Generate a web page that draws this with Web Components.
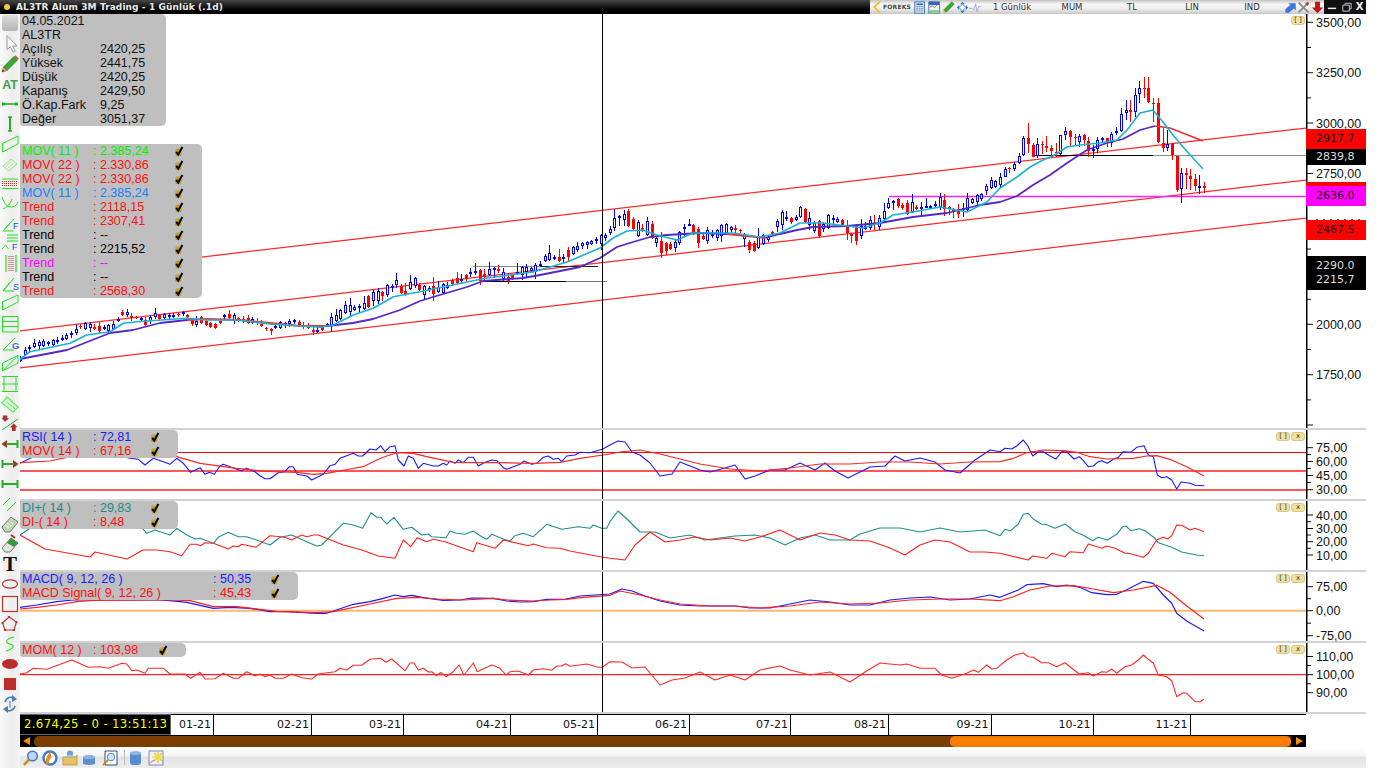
<!DOCTYPE html>
<html lang="tr">
<head>
<meta charset="utf-8">
<title>AL3TR Alum 3M Trading</title>
<style>
  html, body { margin: 0; background: #fff; font-family: "Liberation Sans", Arial, sans-serif; }
</style>
</head>
<body>
<fx-window>
  <fx-titlebar slot="title">AL3TR Alum 3M Trading - 1 Günlük (.1d)</fx-titlebar>
  <fx-rail slot="rail"></fx-rail>

  <fx-pane name="price" height="414" top="14">
    <fx-legend style="--top:0px;--w:146px;--name:78px;--val:66px;--chk:0px">
      <fx-row name="04.05.2021" nocheck></fx-row>
      <fx-row name="AL3TR" nocheck></fx-row>
      <fx-row name="Açılış" value="2420,25" nocheck></fx-row>
      <fx-row name="Yüksek" value="2441,75" nocheck></fx-row>
      <fx-row name="Düşük" value="2420,25" nocheck></fx-row>
      <fx-row name="Kapanış" value="2429,50" nocheck></fx-row>
      <fx-row name="Ö.Kap.Fark" value="9,25" nocheck></fx-row>
      <fx-row name="Değer" value="3051,37" nocheck></fx-row>
    </fx-legend>
    <fx-legend style="--top:130px;--w:182px;--name:71px;--val:81px;--chk:10px">
      <fx-row style="color:#00f000" name="MOV( 11 )" value=": 2.385,24"></fx-row>
      <fx-row style="color:#ff1010" name="MOV( 22 )" value=": 2.330,86"></fx-row>
      <fx-row style="color:#ff1010" name="MOV( 22 )" value=": 2.330,86"></fx-row>
      <fx-row style="color:#1a80ff" name="MOV( 11 )" value=": 2.385,24"></fx-row>
      <fx-row style="color:#ff1010" name="Trend" value=": 2118,15"></fx-row>
      <fx-row style="color:#ff1010" name="Trend" value=": 2307,41"></fx-row>
      <fx-row style="color:#000" name="Trend" value=": --"></fx-row>
      <fx-row style="color:#000" name="Trend" value=": 2215,52"></fx-row>
      <fx-row style="color:#ff00ff" name="Trend" value=": --"></fx-row>
      <fx-row style="color:#000" name="Trend" value=": --"></fx-row>
      <fx-row style="color:#ff1010" name="Trend" value=": 2568,30"></fx-row>
    </fx-legend>
    <fx-pills slot="pills" single></fx-pills>
    <fx-tag slot="axis" y="115" bg="#ff0000">2917,7</fx-tag>
    <fx-tag slot="axis" y="135" bg="#000" fg="#ddd" h="16">2839,8</fx-tag>
    <fx-tag slot="axis" y="168" bg="#ff0000" h="8"></fx-tag>
    <fx-tag slot="axis" y="172" bg="#ff00ff">2636,0</fx-tag>
    <fx-tag slot="axis" y="206" bg="#ff0000">2467,5</fx-tag>
    <fx-tag slot="axis" y="242" bg="#000" fg="#ddd" h="34">2290.0<br>2215,7</fx-tag>
  </fx-pane>

  <fx-pane name="rsi" height="69" top="430">
    <fx-legend style="--top:0px;--w:158px;--name:71px;--val:57px;--chk:10px">
      <fx-row style="color:#1a1aff" name="RSI( 14 )" value=": 72,81"></fx-row>
      <fx-row style="color:#ff1010" name="MOV( 14 )" value=": 67,16"></fx-row>
    </fx-legend>
    <fx-pills slot="pills"></fx-pills>
  </fx-pane>

  <fx-pane name="di" height="69" top="501">
    <fx-legend style="--top:0px;--w:158px;--name:71px;--val:57px;--chk:10px">
      <fx-row style="color:#1a8a8a" name="DI+( 14 )" value=": 29,83"></fx-row>
      <fx-row style="color:#ff1010" name="DI-( 14 )" value=": 8,48"></fx-row>
    </fx-legend>
    <fx-pills slot="pills"></fx-pills>
  </fx-pane>

  <fx-pane name="macd" height="69" top="572">
    <fx-legend style="--top:0px;--w:278px;--name:191px;--val:57px;--chk:10px">
      <fx-row style="color:#1a1aff" name="MACD( 9, 12, 26 )" value=": 50,35"></fx-row>
      <fx-row style="color:#ff1010" name="MACD Signal( 9, 12, 26 )" value=": 45,43"></fx-row>
    </fx-legend>
    <fx-pills slot="pills"></fx-pills>
  </fx-pane>

  <fx-pane name="mom" height="69" top="643">
    <fx-legend style="--top:0px;--w:166px;--name:71px;--val:65px;--chk:10px">
      <fx-row style="color:#ff1010" name="MOM( 12 )" value=": 103,98"></fx-row>
    </fx-legend>
    <fx-pills slot="pills"></fx-pills>
  </fx-pane>

  <fx-datebar></fx-datebar>
  <fx-scroller></fx-scroller>
  <fx-toolbar></fx-toolbar>
</fx-window>

<script>
// zoomed coordinates: offset + value / 3
const z = (ox, oy, f) => { const o = []; for (let i = 0; i < f.length; i += 2) o.push([ox + f[i] / 3, oy + f[i + 1] / 3]); return o; };
const abs = f => z(0, 0, f.map(v => v * 3));

const interp = (pts, x) => {
    if (x <= pts[0][0]) return pts[0][1];
    for (let i = 1; i < pts.length; i++) {
        if (x <= pts[i][0]) {
            const t = (x - pts[i - 1][0]) / (pts[i][0] - pts[i - 1][0]);
            return pts[i - 1][1] + t * (pts[i][1] - pts[i - 1][1]);
        }
    }
    return pts[pts.length - 1][1];
};

const candlePath = [
    ...z(20, 200, [0,478,15,455,40,435,55,432,70,430,85,428,100,428,125,418,150,405,165,395,180,380,195,378,210,378,225,385,240,385,262,385,275,385,292,360,305,340,320,340,335,350,345,352,360,355,375,368,388,360,402,345,418,350,432,348,445,348,472,345,485,335,500,345,515,365,530,370,542,360,555,368,570,375,583,380,597,370,610,348,625,348,640,352,655,358,680,362,695,362,720,370,737,385,750,392,765,382,780,375,795,372,805,368,820,362,832,370,848,380,860,378,875,392,890,392,900,388,915,380,928,368,945,355,960,345,970,330,985,325,1000,325,1012,322,1025,322,1040,310,1055,290,1070,288,1082,285,1097,272,1112,265,1125,245,1138,255,1150,290,1165,265,1180,240]),
    ...z(400, 190, [25,295,40,270,52,285,68,305,82,295,95,300,108,300,120,295,135,295,150,280,165,270,180,272,192,265,205,255,220,240,232,252,248,262,262,250,275,240,290,235,304,250,318,268,332,265,345,250,358,245,372,240,386,238,400,240,415,230,428,212,442,197,455,202,470,205,483,208,496,198,512,183,525,178,538,168,553,160,566,162,580,152,595,150,607,145,622,135,637,112,650,85,663,80,677,80,690,90,706,112,720,122,734,115,748,112,760,130,775,165,790,175,803,168,817,170,830,160,845,130,858,103,871,103,885,125,900,145,914,140,928,135,942,135,956,130,970,115,983,117,997,115,1012,118,1024,125,1040,150,1052,178,1067,165,1080,152,1094,145,1108,145,1122,120,1135,92,1150,82,1163,85,1178,92,1192,80]),
    ...z(780, 100, [60,335,78,350,93,370,105,385,120,385,133,378,148,360,162,355,175,362,190,370,205,400,217,408,232,397,245,392,259,378,273,370,286,375,300,365,316,335,328,310,343,305,355,308,370,322,385,325,398,320,412,325,426,325,440,318,454,322,466,312,481,305,496,315,508,325,523,335,538,335,550,325,565,310,577,302,592,295,607,288,620,260,634,250,649,252,661,240])
];

// last candles: x3, body top, body bottom, wick top, wick bottom, up (in zoom coords, offset 1000,60)
const lastCandles = [
    [0,352,375,345,385,1],[15,327,350,322,352,1],[28,325,326,320,338,0],[43,312,328,305,332,1],[57,288,310,280,312,1],
    [70,233,285,228,288,1],[85,235,253,190,280,0],[100,255,290,250,292,0],[112,253,288,235,293,1],[127,253,254,243,282,0],
    [139,257,264,228,275,0],[154,265,272,255,288,0],[168,275,280,250,290,0],[181,226,282,224,285,1],[196,213,225,202,240,1],
    [211,213,232,210,262,0],[224,232,234,222,258,0],[238,228,245,222,262,1],[251,225,240,222,258,0],[265,242,272,230,290,0],
    [280,268,272,255,293,1],[292,240,268,232,280,1],[307,235,237,232,250,1],[320,235,250,235,262,0],[334,223,248,215,260,1],
    [349,213,220,200,225,1],[362,162,212,145,215,1],[377,150,160,120,180,1],[391,150,155,120,185,0],[404,105,155,85,172,1],
    [418,85,103,62,130,1],[432,83,86,52,115,0],[445,85,125,52,128,0],[460,128,129,115,185,0],[473,130,246,115,248,0],
    [488,248,263,205,275,0],[502,252,264,210,272,1],[515,252,285,250,300,0],[530,288,390,288,395,0],[544,340,388,325,428,1],
    [557,340,346,325,388,0],[571,348,356,328,390,0],[584,358,378,342,392,0],[598,378,379,345,402,1],[613,378,384,366,398,0]
];

const buildCandles = () => {
    let seed = 4711, out = '';
    const rnd = () => (seed = (seed * 16807) % 2147483647) / 2147483647;
    const draw = (x, top, bot, wt, wb, up) => {
        const X = Math.round(x) - 20;
        const t = Math.round(top) - 14, b = Math.max(Math.round(bot) - 14, t + 1);
        out += `<line x1="${X + .5}" x2="${X + .5}" y1="${Math.round(wt) - 14}" y2="${Math.round(wb) - 14}" stroke="${up ? '#00f' : '#f00'}"/>`;
        if (up) out += `<rect x="${X - .5}" y="${t + .5}" width="2" height="${Math.max(b - t - 1, 1)}" fill="#fff" stroke="#00f"/>`;
        else out += `<rect x="${X - 1}" y="${t}" width="3" height="${b - t}" fill="#f00"/>`;
    };
    for (let i = 0; i < 212; i++) {
        const x = 20 + i * 4.644;
        const c = interp(candlePath, x), p = interp(candlePath, x - 4.644);
        const amp = x < 330 ? 2.5 : x < 620 ? 5 : 7;
        const half = Math.pow(rnd(), 1.6) * amp + .6;
        let up = c <= p;
        if (rnd() < .12) up = !up;
        const wt = c - half - 1 - Math.pow(rnd(), 2.4) * (x < 330 ? 4 : 8);
        const wb = c + half + 1 + Math.pow(rnd(), 2.4) * (x < 330 ? 3 : 7);
        draw(x, c - half, c + half, wt, wb, up);
    }
    lastCandles.forEach(k => draw(1000 + k[0] / 3, 60 + k[1] / 3, 60 + k[2] / 3, 60 + k[3] / 3, 60 + k[4] / 3, k[5]));
    return `<g shape-rendering="crispEdges" stroke-width="1">${out}</g>`;
};

const cyan = [
    ...z(20, 200, [0,478,30,455,150,430,200,405,270,395,310,370,350,365,500,355,560,360,650,360,750,372,900,382,940,375,1000,345,1060,325,1120,290,1200,275]),
    ...abs([467,282,487,278,533,272,567,262,600,248,613,238,627,231,643,230,657,235,677,240,693,233,733,233,760,237,780,233,800,223,823,223,847,226,863,228,880,223,893,215,913,212,940,207,967,212,987,202,1000,188,1017,177,1030,167,1043,160,1053,156,1067,147,1080,145,1100,143,1117,140,1127,130,1140,113,1153,110,1163,122,1173,135,1183,147,1203,169])
];
const purpleA = abs([20,359,67,350,110,333,133,330,160,323,187,320]);
const redA = abs([187,320,207,319,240,320,270,323,300,326,327,326]);
const purpleB = abs([327,326,353,323,373,319,400,310,420,301,433,297,467,287,483,281,523,278,540,275,580,267,600,258,617,247,633,242,650,237,667,235,700,233,727,234]);
const redB = abs([727,234,747,236,765,238]);
const purpleC = abs([765,238,780,234,797,230,813,227,847,226,880,223,913,217,947,213,980,205,1000,202,1017,196,1033,185,1050,175,1067,163,1087,150,1107,143,1123,139,1140,130,1155,126]);
const redC = abs([1155,126,1170,128,1203,141]);

const seg = (x1, y1, x2, y2, color, w) => ({ pts: [[x1, y1], [x2, y2]], color, w });
const channel = (y20, y1306) => seg(20, y20, 1306, y1306, '#ff2a2a', 1.25);

const hRule = (y, color, w) => seg(20, y, 1306, y, color, w);

const PANES = {
    price: {
        custom: buildCandles,
        before: [
            channel(278.3, 128), channel(331, 180), channel(368, 218),
            seg(473, 266.5, 540, 266.5, '#888', 1.2), seg(540, 266.5, 598, 266.5, '#222', 1.2),
            seg(483, 281.5, 590, 281.5, '#000', 1.2), seg(566, 281.5, 607, 281.5, '#777', 1.2),
            seg(1033, 155.5, 1153, 155.5, '#000', 1.2), seg(1153, 155.5, 1306, 155.5, '#888', 1.2),
            seg(889, 196.5, 1306, 196.5, '#ff20ff', 1.3)
        ],
        lines: [
            { pts: purpleA, color: '#5428c4', w: 1.8 }, { pts: redA, color: '#f03030', w: 1.8 },
            { pts: purpleB, color: '#5428c4', w: 1.8 }, { pts: redB, color: '#f03030', w: 1.8 },
            { pts: purpleC, color: '#5428c4', w: 1.8 }, { pts: redC, color: '#f03030', w: 1.5 },
            { pts: cyan, color: '#1ab2d2', w: 1.6 }
        ],
        labels: [[22.3, '3500,00'], [72.7, '3250,00'], [123, '3000,00'], [173.5, '2750,00'], [324.3, '2000,00'], [374.7, '1750,00']],
        majors: [22.3, 72.7, 123, 173.5, 224, 274.3, 324.3, 374.7, 425],
        minors: [47.5, 97.9, 148.3, 198.7, 249, 299.3, 349.5, 399.9],
        // tops of the axis label hidden behind the red price tag
        axisExtra: `<path d="M10 205.5H54" stroke="#555" stroke-dasharray="2 5"/>`
    },
    rsi: {
        before: [hRule(452.5, '#ff0000', 1.2), hRule(471, '#ff2020', 1.4), hRule(490, '#ff2020', 1.4)],
        lines: [
            { pts: [...z(0, 300, [60,490,100,470,200,460,300,455,390,475,415,478,435,495,460,475,490,485]), ...z(170, 430, [0,103,20,85,40,100,62,127,90,113,105,133,118,127,133,133,150,108,160,103,200,118,215,122,230,115,255,125,270,137,285,146,300,146,325,128,345,125,358,110,370,110,382,133,410,138,425,150,460,133,480,107,495,103,510,85,550,70,565,78,578,78,600,57,618,60,632,47,645,65,660,50,675,47,685,90,702,108,715,78,730,85,745,115,760,100,790,108,805,108,820,100,830,105,840,93,855,100,865,90,880,98,895,82,910,82,925,108,945,97,965,90,980,92,1000,113,1010,118,1030,110,1050,103,1062,93,1085,103,1100,100,1120,82,1135,78,1150,88,1165,85,1175,95,1190,78,1215,75,1230,67,1260,68,1297,58,1320,45]),
                ...abs([618,441,625,442,632,452,640,455,650,463,660,476,672,474,680,462,690,466,700,470,710,472,725,468,735,465,745,479,755,476,770,470,785,470,800,463,815,470,825,463,835,471,848,478,860,472,870,467,885,466,895,456,905,461,920,458,935,462,945,470,960,473,975,460,990,450]),
                ...z(1000, 420, [0,95,15,85,35,87,50,78,70,60,85,80,98,108,115,95,130,95,150,108,168,117,185,95,198,93,222,117,238,110,250,122,265,140,280,138,295,125,305,122,322,130,340,118,355,112,370,95,392,97,410,82,432,77,445,105,460,110,472,165,485,173,500,170,515,180,530,207,543,186,570,190,585,196,612,197])], color: '#1a1aff', w: 1.1 },
            { pts: [...z(0, 300, [60,488,150,483,210,470,530,470,600,490]), ...z(170, 430, [200,115,290,124,380,127,430,133,470,130,540,117,580,110,620,90,650,78,680,68,730,70,780,82,850,97,920,98,1000,98,1090,100,1170,97,1230,85,1300,75,1320,72]),
                ...abs([620,452,640,450,660,454,680,459,700,464,730,469,760,471,790,468,820,464,850,464,880,462,910,462,940,464,970,462]),
                ...z(1000, 420, [0,125,40,115,80,98,130,90,190,92,230,97,270,110,320,117,400,115,440,108,470,107,510,118,560,140,612,168])], color: '#f52a2a', w: 1.2 }
        ],
        labels: [[447.7, '75,00'], [461.5, '60,00'], [475.5, '45,00'], [489.7, '30,00']],
        minors: [454.5, 468.5, 482.5]
    },
    di: {
        lines: [
            { pts: [...z(0, 300, [60,705,90,685,300,675,425,682,440,700,465,690]), ...z(170, 430, [0,315,20,295,50,315,75,327,90,325,130,340,145,322,175,307,205,320,230,320,260,330,300,345,330,322,365,315,410,335,440,348,455,345,520,280,550,285,578,295,603,248,620,262,632,262,650,282,672,262,700,298,725,292,755,315,775,312,785,320,828,323,840,303,860,310,885,313,910,303,935,320,950,328,965,313,1000,327,1020,333,1035,317,1060,310,1090,320,1130,283,1175,298,1225,290,1260,295,1270,285,1295,295,1310,295,1320,275]),
                ...abs([618,511,628,520,640,532,655,532,670,538,690,535,705,540,720,538,735,536,755,535,770,538,785,545,800,538,815,535,830,540,850,540,860,534,880,528,900,528,920,532,940,528,960,532,985,530]),
                ...z(1000, 420, [0,347,15,328,32,332,55,312,70,283,85,280,100,297,125,313,140,314,165,325,195,312,225,335,250,346,278,362,295,352,322,360,350,343,368,320,378,318,392,332,418,326,435,332,465,355,475,368,515,382,545,396,590,405,612,407])], color: '#1f8f8f', w: 1.1 },
            { pts: [...abs([20,535,45,549,90,557,95,552,127,559,143,550,157,550]), ...z(170, 430, [0,365,35,377,60,343,80,343,92,347,105,338,130,340,175,357,190,348,205,350,215,343,258,352,300,317,345,322,365,330,395,315,410,320,430,315,445,315,520,345,575,360,625,378,675,385,700,330,722,350,742,323,770,335,790,328,825,335,910,365,920,338,975,355,1000,330,1075,347,1090,342,1130,353,1170,355,1200,363,1290,380,1320,385]),
                ...abs([625,560,635,545,650,532,665,542,680,540,695,537,710,540,730,538,745,541,760,537,780,530,800,540,820,533,835,535,850,540,870,541,890,548,905,555,920,545,935,540,950,542,970,552,985,552]),
                ...z(1000, 420, [0,400,85,420,98,408,140,415,155,400,195,410,210,395,250,398,265,372,305,385,320,378,345,385,375,400,385,400,430,412,445,400,470,360,490,352,503,357,515,347,530,315,545,316,570,330,585,325,612,335])], color: '#ff2020', w: 1.1 }
        ],
        labels: [[515, '40,00'], [528.5, '30,00'], [541.7, '20,00'], [555, '10,00']],
        minors: [521.7, 535, 548.3]
    },
    macd: {
        before: [hRule(610.7, '#ffb870', 2)],
        lines: [
            { pts: [...z(0, 550, [60,172,110,165,170,155,220,150,280,150,480,150]), ...z(170, 570, [0,92,50,97,130,115,180,112,240,115,300,125,350,125,440,130,470,130,550,103,600,95,640,85,675,75,700,80,725,76,760,83,820,91,870,90,905,84,970,85,1010,93,1050,96,1090,95,1130,88,1185,88,1230,78,1320,72]),
                ...abs([622,589,632,591,645,596,660,601,680,605,700,606,720,606,735,606,750,608,770,608,790,604,810,600,830,602,850,605,870,605,890,600,910,598,930,597,950,600,970,599,990,595]),
                ...z(1000, 420, [0,532,30,520,55,510,80,494,130,491,170,500,200,495,240,502,275,518,320,524,350,523,385,507,430,484,460,490,490,525,515,550,530,580,560,603,612,633])], color: '#1a1aff', w: 1.2 },
            { pts: [...z(0, 550, [60,177,110,172,170,165,230,155,280,151,480,150]), ...z(170, 570, [0,90,60,92,130,110,200,110,270,118,320,124,440,128,490,125,600,102,680,85,740,82,800,87,880,90,970,85,1010,90,1090,93,1140,90,1190,88,1240,82,1320,76]),
                ...abs([620,591,640,595,660,600,680,604,710,606,735,606,760,608,790,606,820,602,850,604,880,603,910,600,940,599,970,599]),
                ...z(1000, 420, [0,542,40,530,90,510,150,498,220,497,280,507,340,518,400,510,470,496,510,517,550,550,612,597])], color: '#ff2020', w: 1.2 }
        ],
        labels: [[586.7, '75,00'], [610.7, '0,00'], [635.7, '-75,00']],
        minors: [598.7, 623.2]
    },
    mom: {
        before: [hRule(674.7, '#ff2020', 1.3)],
        lines: [
            { pts: [...z(0, 550, [60,372,80,368,100,355,140,358,215,330,265,352,300,350,325,355,365,340,380,342,395,362,410,360,435,370,445,355,490,355]), ...z(170, 570, [0,312,45,312,62,325,90,307,105,327,135,326,160,310,190,325,205,325,230,305,255,317,270,312,285,320,300,315,315,325,340,325,365,312,395,323,425,327,445,312,495,305,510,295,530,300,550,286,575,286,600,268,632,265,648,277,665,267,705,302,720,279,732,279,745,300,760,295,775,306,785,305,800,317,812,307,828,320,850,305,867,285,882,315,910,279,922,305,965,285,990,295,1008,315,1020,305,1045,303,1075,315,1090,300,1120,296,1145,301,1160,288,1175,288,1187,281,1200,289,1250,282,1285,292,1297,292,1320,275]),
                ...abs([622,662,632,668,645,667,660,685,672,680,685,678,700,672,715,680,730,675,745,680,760,670,780,666,790,670,810,675,830,672,850,682,865,672,880,663]),
                ...z(900, 660, [0,15,20,12,60,25,105,25,125,45,155,55,200,40,220,30,235,37,260,15,275,27,290,25,320,0,345,-15,370,-21,385,-10,400,-8,425,8,445,8,470,20,495,8,537,42,565,38,580,48,605,35,620,37,635,27,650,40,675,20,695,15,715,0,730,-15,745,-2,760,10,775,45,800,50,815,62,830,110,850,98,860,100,885,125,900,125,912,118])], color: '#ff2a2a', w: 1.1 }
        ],
        labels: [[656.5, '110,00'], [674.7, '100,00'], [692.7, '90,00']],
        minors: [665.5, 683.7]
    }
};

const G = '#1fe51f';
const ICONS = {
    blank: `<defs><linearGradient id="b" x1="0" y1="0" x2="0" y2="1"><stop offset="0" stop-color="#dcdcdc"/><stop offset="1" stop-color="#b4b4b4"/></linearGradient></defs><rect x="2" y="1" width="16" height="16" rx="3" fill="url(#b)"/>`,
    cursor: `<path d="M7 1.5V15.5L10.4 12.8L13 18L15.2 17L12.6 12H17Z" fill="#f6f6f6" stroke="#9a9a9a"/>`,
    pencil: `<path d="M14 2.5L17.5 6L7 16.5L3.5 13Z" fill="#3aa82a" stroke="#256f1a" stroke-width=".7"/><path d="M3.5 13L7 16.5L2 18Z" fill="#e8b878" stroke="#80501e" stroke-width=".6"/><path d="M2 18L3 15.8L4.2 17Z" fill="#222"/><path d="M14 2.5L15.5 1.2L18.8 4.5L17.5 6Z" fill="#d25a3a"/>`,
    at: `<text x="10" y="15" text-anchor="middle" font-family="Liberation Sans" font-weight="700" font-size="12.5" fill="#4a9a52">AT</text>`,
    hline: `<path d="M3 10H17" stroke="#25ad25" stroke-width="1.6"/><rect x="2" y="8.5" width="3" height="3" fill="#25ad25"/><rect x="15" y="8.5" width="3" height="3" fill="#25ad25"/>`,
    vline: `<path d="M10 3V17" stroke="#25ad25" stroke-width="2"/><path d="M8 3H12M8 17H12" stroke="#25ad25" stroke-width="1.6"/>`,
    chan: `<path d="M2.5 9V18L18 10V2L2.5 9.5" fill="none" stroke="${G}"/>`,
    ruler: `<path d="M3 12L11 5L17 10L9 17Z" fill="#e6f6e2" stroke="#8fe58f"/><path d="M6 12L11 8M8 14L13 10" stroke="#f0a0a0" stroke-dasharray="1 1"/>`,
    dots: `<path d="M2 5H18M2 14.5H18" stroke="${G}"/><path d="M2 7.5H18M2 9.5H18M2 11.5H18" stroke="#c03030" stroke-dasharray="1 1"/>`,
    arcs: `<path d="M2 3Q5 13 11 13Q16 13 18 8M3 15Q9 13 12 5" fill="none" stroke="${G}"/>`,
    fanf: `<path d="M3 17L14 5M3 17L10 9M3 17H13" fill="none" stroke="${G}"/><text x="13" y="15" font-family="Liberation Sans" font-size="9" fill="#2a50d8">F</text>`,
    linesf: `<path d="M7 1H18M7 4H18M7 7H18M2 15L5.5 11L8.5 15" fill="none" stroke="${G}"/><text x="12" y="16" font-family="Liberation Sans" font-size="9" fill="#2a50d8">F</text>`,
    vdots: `<path d="M6 1V18M16 1V18" stroke="${G}" stroke-width="1.2"/><path d="M9 2V17M11 2V17M13 2V17" stroke="#c03030" stroke-dasharray="1 1"/>`,
    fans: `<path d="M3 17L14 4M3 17L9 9M3 17H14" fill="none" stroke="${G}"/><text x="13" y="16" font-family="Liberation Sans" font-size="9" fill="#2a50d8">S</text>`,
    chan2: `<path d="M2.5 7V16L18 8V1L2.5 8" fill="none" stroke="${G}"/>`,
    grid: `<path d="M2.5 2.5H18V18H2.5ZM2.5 7.5H18M2.5 12.5H18" fill="none" stroke="${G}"/>`,
    fang: `<path d="M3 16L15 4M3 16L10 9M3 16H14" fill="none" stroke="${G}"/><text x="12" y="15" font-family="Liberation Sans" font-size="9.5" font-weight="700" fill="#4a70c8">G</text>`,
    zig: `<path d="M2.5 9L18 1.5M2.5 17L18 9M2.5 9V17M18 1.5V9M2.5 17L18 1.5" fill="none" stroke="${G}"/>`,
    hbar: `<path d="M2 2.5H18M2 10H18M2 17.5H18M4 2.5V17.5M16 2.5V17.5" fill="none" stroke="${G}"/>`,
    ruler2: `<path d="M2 9L7 3L18 13L13 18Z" fill="#d4fbd4" stroke="#6cea6c" stroke-width="1.3"/><path d="M7 8L9 10M10 10.5L12 12.5M13 13L15 15" stroke="#5ad85a"/>`,
    redarrows: `<path d="M2 16L18 5" stroke="#27a527"/><path d="M2 5H7V8H9L4.5 12L0.5 8H2Z" transform="translate(1 -3) scale(.9)" fill="#b03030"/><path d="M15 11L19 15H17V19H13V15H11Z" transform="translate(-.5 -1) scale(.95)" fill="#b03030"/>`,
    leftbar: `<path d="M1.5 10L7 6V14Z" fill="#a83020"/><path d="M6 10H18M17.5 6V14" stroke="#25ad25" stroke-width="2"/>`,
    rightbar: `<path d="M18.5 10L13 6V14Z" fill="#a83020"/><path d="M2 10H14M2.5 6V14" stroke="#25ad25" stroke-width="2"/>`,
    bar: `<path d="M2 10H18M2.5 6V14M17.5 6V14" stroke="#25ad25" stroke-width="2"/>`,
    dbl: `<path d="M3 11L10 4M7 17L16 8" stroke="${G}"/>`,
    eraser: `<path d="M2 13L11 3L18 8L10 18L5 18Z" fill="#bcd8b0" stroke="#777"/><path d="M9 7L13 10M7 9L11 12M5 11L9 14" stroke="#fff"/>`,
    eraser2: `<path d="M2 14L11 4L18 9L10 18L5 18Z" fill="#dfe8d8" stroke="#777"/><path d="M11 4L18 9L14 13L7 9Z" fill="#3a9a3a"/><path d="M11 1L15 4" stroke="#c03030" stroke-width="2"/>`,
    bigt: `<text x="10" y="17" text-anchor="middle" font-family="Liberation Serif" font-weight="700" font-size="21" fill="#111">T</text>`,
    oval: `<ellipse cx="10" cy="10" rx="7.5" ry="4.2" fill="none" stroke="#b8352c" stroke-width="1.2"/>`,
    square: `<rect x="2.5" y="2.5" width="15" height="15" fill="none" stroke="#b8352c" stroke-width="1.2"/>`,
    penta: `<path d="M9 3L16.5 8L14 16H5L2.5 9Z" fill="none" stroke="#b8352c" stroke-width="1.1"/><g fill="#b8352c"><rect x="8" y="2" width="2" height="2"/><rect x="15.5" y="7" width="2" height="2"/><rect x="13" y="15" width="2" height="2"/><rect x="4" y="15" width="2" height="2"/><rect x="1.5" y="8" width="2" height="2"/></g>`,
    squig: `<path d="M14 3C5 5 5 9 10 10C15 11 15 14 6 17" fill="none" stroke="${G}" stroke-width="1.1"/>`,
    ovalf: `<ellipse cx="10" cy="10" rx="8" ry="5" fill="#bb2f29"/>`,
    squaref: `<rect x="4" y="4" width="12" height="12" fill="#bb2f29"/>`,
    cycle: `<path d="M5 8C6 3 12 2 15 5M15 12C14 17 8 18 5 15" fill="none" stroke="#4a7ab0" stroke-width="1.4"/><path d="M12 1L17 5L12 8ZM8 19L3 15L8 12Z" fill="#4a7ab0"/><path d="M10 7V14" stroke="#4a7ab0"/>`,

    calc: `<rect x="1" y="1" width="12" height="14" fill="#dde8f8" stroke="#2a5aa0"/><path d="M3 3H11V5H3Z" fill="#2a70c8"/><path d="M3 7H5M6 7H8M9 7H11M3 9.5H5M6 9.5H8M9 9.5H11M3 12H5M6 12H8M9 12H11" stroke="#2a5aa0"/>`,
    minichart: `<rect x="1" y="1" width="13" height="14" fill="#f0f4fc" stroke="#3a6ab0"/><path d="M1 1H14V5H1Z" fill="#2a68c8"/><path d="M2 8L5 6L8 8L13 3" stroke="#e04040" fill="none"/><path d="M1 11H14V15H1Z" fill="#8fd08f"/>`,
    pencil2: `<path d="M12 1L15 4L5 14L2 11Z" fill="#3aa82a" stroke="#256f1a" stroke-width=".6"/><path d="M2 11L5 14L1 15Z" fill="#e8b878"/>`,
    diamond: `<path d="M8 1L11 4H5ZM8 15L5 12H11ZM1 8L4 5V11ZM15 8L12 11V5Z" fill="#3a78d0"/><rect x="5" y="5" width="6" height="6" fill="#fff" stroke="#3a78d0" transform="rotate(45 8 8)"/>`,
    pulse: `<path d="M0 9H4L6 11L8 4L10 13L12 7H15" fill="none" stroke="#9aa8b8"/>`,
    upright: `<path d="M2 10L8 5L6 3H14V11L12 9L6 14H2Z" fill="#3a78e0" stroke="#2050b0" stroke-width=".5"/>`,
    tools: `<path d="M2 2L14 14M14 2L2 14" stroke="#8a8a8a" stroke-width="2.2"/><path d="M10 3L13 1L15 3L13 6Z" fill="#c04030"/>`,
    down: `<path d="M5 1H11V8H15L8 15L1 8H5Z" fill="#c01818"/>`,

    lens: `<circle cx="10.5" cy="6" r="4.8" fill="#b8d8f6" stroke="#4878b8" stroke-width="1.5"/><path d="M7 9.5L2 15" stroke="#c58a20" stroke-width="2.6"/>`,
    globe: `<circle cx="8" cy="8" r="6.5" fill="#fff" stroke="#3f7cc4" stroke-width="2.4"/><path d="M9 1C7 5 12 6 8 9C6 11 9 14 5 15C2 11 5 5 9 1Z" fill="#e88a20"/>`,
    folder: `<path d="M1 7H13L15 5V15H1Z" fill="#e6c266" stroke="#a98a30" stroke-width=".7"/><circle cx="8" cy="3.5" r="3" fill="#6f9bd8"/><path d="M3 7Q8 2 13 7Z" fill="#9cc0ea"/>`,
    cyl: `<path d="M1 7Q7 3 13 7V14Q7 16 1 14Z" fill="#5f8fcf"/><ellipse cx="7" cy="7" rx="6" ry="2" fill="#90b4e4"/>`,
    pagezoom: `<path d="M3 1H15V15H3Z" fill="#fff" stroke="#3a4a70"/><circle cx="9" cy="7" r="3.8" fill="#cfe3f8" stroke="#5a88c0"/><path d="M6 10L1 15" stroke="#c58a20" stroke-width="2"/>`,
    drum: `<rect x="1" y="2" width="11" height="13" rx="3" fill="#5a8cd0"/><ellipse cx="6.5" cy="3" rx="5.5" ry="2" fill="#8fb4e6"/>`,
    sun: `<rect x="1" y="1" width="14" height="14" fill="#eef2fa" stroke="#7a8ab0"/><path d="M10 1L10 13M4 7H15M6 3L14 11M14 3L6 11" stroke="#f0c020" stroke-width="1.2"/><circle cx="10" cy="7" r="2.6" fill="#f8d830"/><path d="M2 13L6 10" stroke="#e06060"/>`,
    ctlmin: `<path d="M2 8H11" stroke="#eee" stroke-width="1.6"/>`,
    ctlmax: `<path d="M2 4.5H9V11H2ZM4.5 4.5V2.5H11V8.5H9" fill="none" stroke="#ccc"/>`
};

class FxIcon extends HTMLElement {
    connectedCallback() {
        const size = +(this.getAttribute('size') || 20);
        const vb = this.getAttribute('vb') || size;
        this.attachShadow({ mode: 'open' }).innerHTML = `
            <style>:host { display: block; width: ${size}px; height: ${size}px; } svg { display: block; overflow: visible; }</style>
            <svg width="${size}" height="${size}" viewBox="0 0 ${vb} ${vb}">${ICONS[this.getAttribute('name')] || ''}</svg>`;
    }
}

class FxWindow extends HTMLElement {
    constructor() {
        super();
        this.attachShadow({ mode: 'open' }).innerHTML = `
            <style>
                :host { display: grid; width: 1366px; height: 768px; grid-template: 14px 1fr / 20px 1fr; overflow: hidden; }
                ::slotted([slot=title]) { grid-column: 1 / 3; }
                .stack { display: flex; flex-direction: column; min-width: 0; }
            </style>
            <slot name="title"></slot>
            <slot name="rail"></slot>
            <div class="stack"><slot></slot></div>`;
    }
}

class FxTitlebar extends HTMLElement {
    constructor() {
        super();
        const cell = (n, s = 14) => `<span class="cell" style="width:${s}px"><fx-icon name="${n}" size="13" vb="16"></fx-icon></span>`;
        const item = t => `<span class="item">${t}</span>`;
        this.attachShadow({ mode: 'open' }).innerHTML = `
            <style>
                :host { display: flex; height: 14px; background: linear-gradient(#464646, #000 70%); color: #e8e8e8; overflow: hidden; }
                .title { flex: 1; display: flex; align-items: center; gap: 6px; padding-left: 4px; font: 700 9px/14px "DejaVu Sans", sans-serif; letter-spacing: .1px; white-space: nowrap; }
                .dot { width: 6px; height: 6px; border-radius: 50%; background: #f4c73a; }
                .bar { width: 454px; display: flex; align-items: center; background: linear-gradient(#c4c4c4, #f8f8f8 30%, #efefef 60%, #c8c8c8); color: #333; font: 8.5px/14px "DejaVu Sans", sans-serif; }
                .logo { width: 43px; display: flex; align-items: center; gap: 2px; padding-left: 2px; box-sizing: border-box; font: 700 6px/14px "DejaVu Sans", sans-serif; letter-spacing: .2px; color: #444; }
                .chev { width: 9px; height: 12px; flex: none; color: #f2b90f; }
                .cell { display: flex; justify-content: center; align-items: center; }
                .item { width: 60px; text-align: center; }
                .pad { width: 2px; }
                .ctl { width: 42px; display: flex; align-items: center; justify-content: space-around; background: #111; color: #eee; font: 700 10px/14px "DejaVu Sans", sans-serif; padding-right: 1px; box-sizing: border-box; }
            </style>
            <div class="title"><span class="dot"></span><span><slot></slot></span></div>
            <div class="bar">
                <div class="logo">
                    <svg class="chev" viewBox="0 0 8 10"><path d="M6 0L1 5L6 10L8 10L3 5L8 0Z" fill="currentColor"/></svg>
                    <span>FOREKS</span>
                </div>
                ${cell('calc')}${cell('minichart')}${cell('pencil2')}${cell('diamond')}${cell('pulse', 13)}
                ${item('1 Günlük')}${item('MUM')}${item('TL')}${item('LIN')}${item('IND')}
                <span class="pad"></span>
                ${cell('upright', 13)}${cell('tools', 13)}${cell('down', 14)}
            </div>
            <div class="ctl"><fx-icon name="ctlmin" size="12" vb="13"></fx-icon><fx-icon name="ctlmax" size="12" vb="13"></fx-icon><span>X</span></div>`;
    }
}

class FxRail extends HTMLElement {
    tools = ['blank', 'cursor', 'pencil', 'at', 'hline', 'vline', 'chan', 'ruler', 'dots', 'arcs', 'fanf', 'linesf', 'vdots', 'fans', 'chan2', 'grid', 'fang', 'zig', 'hbar', 'ruler2', 'redarrows', 'leftbar', 'rightbar', 'bar', 'dbl', 'eraser', 'eraser2', 'bigt', 'oval', 'square', 'penta', 'squig', 'ovalf', 'squaref', 'cycle'];
    constructor() {
        super();
        this.attachShadow({ mode: 'open' }).innerHTML = `
            <style>
                :host { display: flex; flex-direction: column; width: 20px; background: linear-gradient(90deg, #fafafa, #ececec 60%, #f4f4f4); }
            </style>
            ${this.tools.map(t => `<fx-icon name="${t}"></fx-icon>`).join('')}`;
    }
}

class FxPane extends HTMLElement {
    connectedCallback() {
        const h = +this.getAttribute('height');
        const top = +this.getAttribute('top');
        const p = PANES[this.getAttribute('name')];
        const poly = l => `<polyline points="${l.pts.map(q => `${(q[0] - 20).toFixed(1)},${(q[1] - top).toFixed(1)}`).join(' ')}" fill="none" stroke="${l.color}" stroke-width="${l.w}" stroke-linejoin="round"/>`;
        const majors = p.majors || p.labels.map(l => l[0]);
        const ticks = majors.map(y => `<path d="M1 ${(y - top).toFixed(1)}H7" stroke="#111"/>`).join('')
            + (p.minors || []).map(y => `<path d="M1 ${(y - top).toFixed(1)}H5" stroke="#111"/>`).join('');
        const labels = p.labels.map(l => `<text x="10" y="${(l[0] - top + 4.5).toFixed(1)}">${l[1]}</text>`).join('');
        this.attachShadow({ mode: 'open' }).innerHTML = `
            <style>
                :host { display: grid; grid-template-columns: 1286px 60px; height: ${h}px; border-bottom: 2px solid #d2d2d2; }
                .plot, .axis { position: relative; height: ${h}px; }
                .plot { overflow: hidden; }
                svg { display: block; position: absolute; left: 0; top: 0; overflow: visible; }
                text { font: 12.5px "Liberation Sans", Arial, sans-serif; fill: #111; }
                .pills { position: absolute; right: 1px; top: 2px; }
            </style>
            <div class="plot">
                <svg width="1286" height="${h}">
                    ${(p.before || []).map(poly).join('')}
                    ${p.custom ? p.custom() : ''}
                    ${p.lines.map(poly).join('')}
                    <path d="M582.5 0V${h}" stroke="#000" stroke-width="1"/>
                </svg>
                <slot></slot>
                <div class="pills"><slot name="pills"></slot></div>
            </div>
            <div class="axis">
                <svg width="60" height="${h}">
                    <path d="M.75 0V${h}" stroke="#000" stroke-width="1.5"/>
                    ${ticks}${labels}${p.axisExtra || ''}
                </svg>
                <slot name="axis"></slot>
            </div>`;
    }
}

class FxLegend extends HTMLElement {
    constructor() {
        super();
        this.attachShadow({ mode: 'open' }).innerHTML = `
            <style>
                :host { position: absolute; left: 0; top: var(--top, 0); width: var(--w); box-sizing: border-box; padding-left: 2px; background: #bfbfbf; border-radius: 0 5px 5px 3px; display: flex; flex-direction: column; }
            </style>
            <slot></slot>`;
    }
}

class FxRow extends HTMLElement {
    connectedCallback() {
        const check = this.hasAttribute('nocheck') ? '' : `
            <svg width="10" height="12" viewBox="0 0 10 12"><rect x="1" y="3.5" width="6.5" height="7.5" rx="2" fill="#c9a21e"/><path d="M2.2 6.8L4.2 9.6L8.4 2" fill="none" stroke="#000" stroke-width="2"/></svg>`;
        this.attachShadow({ mode: 'open' }).innerHTML = `
            <style>
                :host { display: grid; grid-template-columns: var(--name) var(--val) var(--chk); height: 14px; align-items: center; font: 12.5px/14px "Liberation Sans", Arial, sans-serif; color: #111; white-space: nowrap; }
                svg { display: block; }
            </style>
            <span>${this.getAttribute('name')}</span><span>${this.getAttribute('value') || ''}</span>${check}`;
    }
}

class FxPills extends HTMLElement {
    connectedCallback() {
        this.attachShadow({ mode: 'open' }).innerHTML = `
            <style>
                :host { display: flex; gap: 1px; }
                span { width: 14px; height: 9px; box-sizing: border-box; background: #f1e0a4; border: 1px solid #dcc67e; border-radius: 3px; color: #333; font: 7px/7px "DejaVu Sans", sans-serif; text-align: center; }
            </style>
            <span>[ ]</span>${this.hasAttribute('single') ? '' : '<span>x</span>'}`;
    }
}

class FxTag extends HTMLElement {
    connectedCallback() {
        const h = this.getAttribute('h') || 20;
        this.attachShadow({ mode: 'open' }).innerHTML = `
            <style>
                :host { position: absolute; left: 0; top: ${this.getAttribute('y')}px; width: 60px; height: ${h}px; box-sizing: border-box; padding-left: 10px; display: flex; align-items: center; background: ${this.getAttribute('bg')}; color: ${this.getAttribute('fg') || '#111'}; font: 11px/14px "DejaVu Sans", sans-serif; }
            </style>
            <span><slot></slot></span>`;
    }
}

class FxDatebar extends HTMLElement {
    months = [['01-21', 43], ['02-21', 98], ['03-21', 92], ['04-21', 107], ['05-21', 87], ['06-21', 92], ['07-21', 101], ['08-21', 98], ['09-21', 102.5], ['10-21', 102], ['11-21', 97]];
    constructor() {
        super();
        this.attachShadow({ mode: 'open' }).innerHTML = `
            <style>
                :host { display: flex; width: 1286px; height: 21px; box-sizing: border-box; font: 11px/20px "DejaVu Sans", sans-serif; color: #111; }
                .clock { width: 151px; box-sizing: border-box; background: #000; border: 1px solid #666; border-left: 0; color: #ffff00; font-size: 11.7px; letter-spacing: .35px; line-height: 19px; padding-left: 4px; white-space: nowrap; }
                .m { box-sizing: border-box; border-right: 1px solid #000; border-top: 1px solid #000; text-align: right; padding-right: 2px; }
                .rest { flex: 1; border-top: 1px solid #000; }
            </style>
            <div class="clock">2.674,25 - 0 - 13:51:13</div>
            ${this.months.map(m => `<div class="m" style="width:${m[1]}px">${m[0]}</div>`).join('')}
            <div class="rest"></div>`;
    }
}

class FxScroller extends HTMLElement {
    constructor() {
        super();
        this.attachShadow({ mode: 'open' }).innerHTML = `
            <style>
                :host { display: flex; align-items: center; width: 1286px; height: 12px; background: #000; }
                .arrow { width: 0; height: 0; border-style: solid; border-color: transparent; border-width: 4.5px 0; }
                .l { border-right: 7px solid #ff8a10; margin: 0 4px 0 3px; }
                .r { border-left: 7px solid #ff8a10; margin: 0 3px 0 5px; }
                .track { flex: 1; height: 11px; border-radius: 5px 0 0 5px; background: linear-gradient(90deg, #7a3e02 0, #7a3e02 90%, #4a2400 100%); background-color: #6b3500; display: flex; justify-content: flex-end; }
                .thumb { width: 341px; height: 11px; border-radius: 5px; background: linear-gradient(#e87400, #ff8205 30%, #f07a00); }
            </style>
            <div class="arrow l"></div>
            <div class="track"><div class="thumb"></div></div>
            <div class="arrow r"></div>`;
    }
}

class FxToolbar extends HTMLElement {
    constructor() {
        super();
        const ic = (n, w = 20) => `<span style="width:${w}px"><fx-icon name="${n}" size="16"></fx-icon></span>`;
        this.attachShadow({ mode: 'open' }).innerHTML = `
            <style>
                :host { display: flex; align-items: center; height: 21px; padding-left: 2px; background: linear-gradient(#fff, #f5f5f5 42%, #e3e3e3 48%, #eeeeee); }
                span { display: block; }
                .sep { width: 1px; height: 15px; background: #bbb; margin: 0 4px 0 3px; }
            </style>
            ${ic('lens')}${ic('globe')}${ic('folder')}${ic('cyl')}${ic('pagezoom', 19)}
            <div class="sep"></div>
            ${ic('drum', 19)}${ic('sun')}`;
    }
}

customElements.define('fx-icon', FxIcon);
customElements.define('fx-row', FxRow);
customElements.define('fx-legend', FxLegend);
customElements.define('fx-pills', FxPills);
customElements.define('fx-tag', FxTag);
customElements.define('fx-pane', FxPane);
customElements.define('fx-rail', FxRail);
customElements.define('fx-titlebar', FxTitlebar);
customElements.define('fx-datebar', FxDatebar);
customElements.define('fx-scroller', FxScroller);
customElements.define('fx-toolbar', FxToolbar);
customElements.define('fx-window', FxWindow);
</script>
</body>
</html>
